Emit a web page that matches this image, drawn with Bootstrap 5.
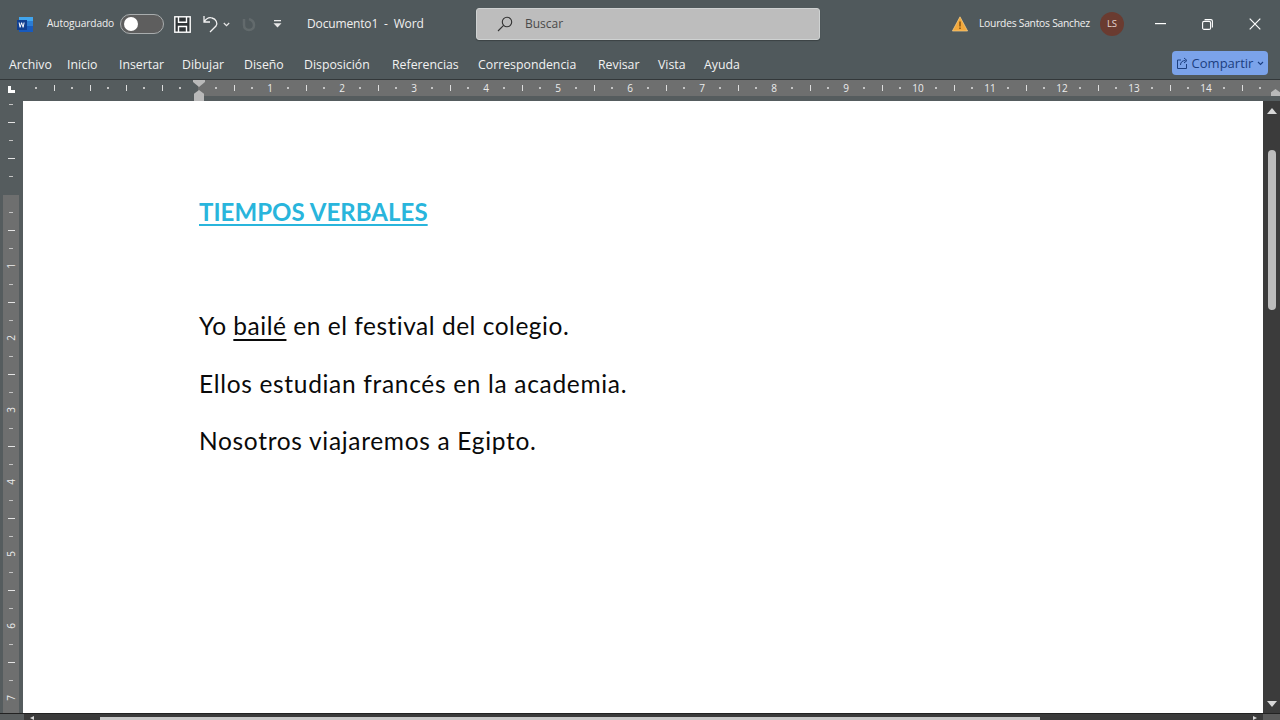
<!DOCTYPE html>
<html lang="es">
<head>
<meta charset="utf-8">
<title>Documento1 - Word</title>
<link href="https://cdn.jsdelivr.net/npm/bootstrap@5.3.0/dist/css/bootstrap.min.css" rel="stylesheet">
<style>
html,body{height:720px;overflow:hidden;background:#50595c}
body{font-family:"Open Sans","Noto Sans",sans-serif}
.wd-title{height:48px;background:#50595c;color:#f0f0f0;font-size:10.2px}
.wd-title>*{flex:none}
.wd-logo{margin-left:16px;width:17px;height:17px}
.wd-auto{margin-left:14px;width:68px;white-space:nowrap;letter-spacing:-.1px}
.wd-toggle{margin-left:5px;width:44px;height:20px;border:1px solid #a9adae;border-radius:10px;background:#5e5e5e;padding:2px 3px}
.wd-knob{width:14px;height:14px;border-radius:50%;background:#fff}
.wd-save{margin-left:10px}
.wd-undo{margin-left:12px}
.wd-chev{margin-left:4px}
.wd-redo{margin-left:11px}
.wd-qa{margin-left:16px}
.wd-doc{margin-left:25px;width:169px;font-size:12px;letter-spacing:-.15px;white-space:nowrap}
.wd-search{width:344px;height:32px;background:#bdbdbd;border:1px solid #cfd2d2;border-radius:3px;color:#4a4a4a;font-size:12px;box-shadow:0 1px 1px #3b4244}
.wd-search svg{margin-left:20px;margin-right:12px}
.wd-warn{margin-left:132px}
.wd-user{margin-left:11px;width:121px;font-size:10.3px;letter-spacing:-.25px;white-space:nowrap}
.wd-avatar{width:24px;height:24px;border-radius:50%;background:#6a3b30;color:#e6d5d0;font-size:9.5px}
.wd-winbtn{width:47px}
.wd-min{margin-left:13px}
.wd-menu{height:31px;background:#50595c;color:#f2f2f2;font-size:12.3px;padding:3px 0 0 9px;display:grid;grid-template-columns:58px 52px 63px 62px 60px 88px 86px 120px 60px 46px 468px 96px;align-items:center;white-space:nowrap}
.wd-share{width:96px;height:24px;padding:2px 0 0 3px;background:#7ba3ea;border:0;border-radius:4px;color:#1c3f80;font-size:13px;margin-top:-5px}
.wd-share:hover{background:#7ba3ea;color:#1c3f80}
.wd-share svg{margin-right:3px}
.wd-rule-h{height:22px;background:#555c5e;border-top:1px solid #33383a;position:relative;overflow:hidden}
.wd-tab{width:27px}
.wd-tab-glyph{width:7px;height:7px;margin:6px 0 0 8px;border-left:3px solid #fff;border-bottom:3px solid #fff}
.wd-rl{width:171px;height:16px}
.wd-rr{height:16px;background:#6e6f6f;padding-left:9px}
.wd-c{width:18px;height:16px;flex:none;display:flex;align-items:center;justify-content:center;color:#ececec;font-size:10px;line-height:1}
.wd-c.dt::before{content:"";width:2px;height:2px;background:#c4c4c4}
.wd-c.tk::before{content:"";width:1px;height:6px;background:#dedede}
.wd-ind-top{position:absolute;left:193px;top:0;width:12px;height:7px;background:#b9b9b9;clip-path:polygon(0 0,100% 0,100% 30%,50% 100%,0 30%)}
.wd-ind-bot{position:absolute;left:194px;top:10px;width:10px;height:11px;background:#b9b9b9;clip-path:polygon(50% 0,100% 35%,100% 100%,0 100%,0 35%)}
.wd-ind-r{position:absolute;left:1271px;top:9px;width:9px;height:7px;background:#b9b9b9;clip-path:polygon(50% 0,100% 45%,100% 100%,0 100%,0 45%)}
.wd-work{height:619px}
.wd-rule-v{width:23px;background:#555c5e;overflow:hidden}
.wd-vstrip{margin:-6px 0 0 3px;width:16px;background:linear-gradient(#555c5e 100px,#6e6f6f 100px)}
.wd-v{width:16px;height:18px;display:flex;align-items:center;justify-content:center;color:#ececec;font-size:10px;line-height:1}
.wd-v.dt::before{content:"";width:4px;height:1px;background:#c4c4c4}
.wd-v.tk::before{content:"";width:7px;height:1px;background:#e4e4e4}
.wd-v span{transform:rotate(-90deg)}
.wd-page{background:#fff;height:612px;padding:97px 0 0 176px;color:#0a0a0a;font-family:Lato,"Noto Sans",sans-serif;font-size:24.5px}
.wd-head{font-size:24px;font-weight:700;color:#29b5dc;text-decoration:underline;text-underline-offset:3px;text-decoration-thickness:1.5px;line-height:28px;margin:0 0 86px;letter-spacing:.05px}
.wd-line{line-height:28px;margin:0 0 29.5px;letter-spacing:.68px}
.wd-line-tight{letter-spacing:.52px}
.wd-line u{text-underline-offset:4px;text-decoration-thickness:1.5px}
.wd-vscroll{width:17px;height:619px;background:#3b3b3b}
.wd-arr-up{width:0;height:0;margin:7px auto 0;border:5px solid transparent;border-top:0;border-bottom:6px solid #d8d8d8}
.wd-thumb{width:8px;height:160px;margin:36px auto 0;background:#bcbcbc;border-radius:4px}
.wd-arr-dn{width:0;height:0;margin:0 auto 13px;border:5px solid transparent;border-bottom:0;border-top:6px solid #d8d8d8}
.wd-hscroll{height:7px;margin-top:-7px;background:#3b3b3b;border-top:1px solid #222;position:relative}
.wd-hleft{width:24px;background:#5a5e5f}
.wd-harr-l{width:0;height:0;margin:2px 0 0 6px;border:2px solid transparent;border-left:0;border-right:4px solid #d8d8d8}
.wd-hspace{width:68px}
.wd-hthumb{width:940px;height:3px;margin-top:3px;background:#c8c8c8}
.wd-harr-r{width:0;height:0;margin:2px 6px 0 0;border:2px solid transparent;border-right:0;border-left:4px solid #d8d8d8}
.wd-corner{width:17px;background:#5a5a5a}
</style>
</head>
<body>
<div class="d-flex flex-column">

  <header class="wd-title d-flex align-items-center">
    <svg class="wd-logo" viewBox="0 0 17 17"><rect x="3" y="1" width="14" height="15" fill="#2b7cd3"/><rect x="3" y="1" width="14" height="4" fill="#41a5ee"/><rect x="3" y="10" width="14" height="6" fill="#185abd"/><rect x="1" y="4" width="10" height="10" fill="#103f91"/><path d="M2.6 6.4l1 5h1l1-3.4 1 3.4h1l1-5h-1l-.6 3.3-.9-3.3h-1l-.9 3.3-.6-3.3z" fill="#fff"/></svg>
    <span class="wd-auto">Autoguardado</span>
    <div class="wd-toggle d-flex align-items-center"><div class="wd-knob"></div></div>
    <svg class="wd-save" width="17" height="17" viewBox="0 0 17 17" fill="none" stroke="#fff" stroke-width="1.4"><rect x=".8" y=".8" width="15.400" height="15.400" fill="#2f3436"/><path d="M4.500 1v5.300h8V1M4.500 16v-5.500h8V16"/></svg>
    <svg class="wd-undo" width="16" height="18" viewBox="0 0 16 18" fill="none" stroke="#f2f2f2" stroke-width="1.300"><path d="M1 1v6h6M1 7c2-3 5-5 8-4 4 1 6 5 4 8l-6 6"/></svg>
    <svg class="wd-chev" width="7" height="5" viewBox="0 0 7 5" fill="none" stroke="#e8e8e8" stroke-width="1.200"><path d="M.8 1l2.700 2.700L6.200 1"/></svg>
    <svg class="wd-redo" width="16" height="17" viewBox="0 0 16 17" fill="none" stroke="#626a6c" stroke-width="2.500"><path d="M3 3v6c0 3 2 5 5 5s5-2 5-5c0-3-2-5-5-6"/></svg>
    <svg class="wd-qa" width="9" height="8" viewBox="0 0 9 8" fill="#e8e8e8"><rect x="1" y="0" width="7" height="1.300"/><path d="M.5 3.200h8L4.500 7.500z"/></svg>
    <span class="wd-doc">Documento1&nbsp; -&nbsp; Word</span>
    <div class="wd-search d-flex align-items-center">
      <svg width="16" height="16" viewBox="0 0 16 16" fill="none" stroke="#333" stroke-width="1.100"><circle cx="10" cy="6" r="4.700"/><path d="M6.600 9.400L1 15"/></svg>
      <span>Buscar</span>
    </div>
    <svg class="wd-warn" width="16" height="16" viewBox="0 0 16 16"><path d="M8 .8L15.600 15H.4z" fill="#f3a83b" stroke="#f7d08a" stroke-width=".7"/><rect x="7.300" y="5.500" width="1.400" height="5" fill="#7a4a10"/><rect x="7.300" y="11.500" width="1.400" height="1.500" fill="#7a4a10"/></svg>
    <span class="wd-user">Lourdes Santos Sanchez</span>
    <div class="wd-avatar d-flex align-items-center justify-content-center">LS</div>
    <div class="wd-winbtn wd-min d-flex justify-content-center"><svg width="11" height="2" viewBox="0 0 11 2"><rect width="11" height="1.200" fill="#fff"/></svg></div>
    <div class="wd-winbtn d-flex justify-content-center"><svg width="11" height="11" viewBox="0 0 11 11" fill="none" stroke="#fff" stroke-width="1.100"><rect x=".6" y="2.400" width="8" height="8" rx="1.500"/><path d="M2.600.6h6.300a1.600 1.600 0 0 1 1.500 1.500v6.300"/></svg></div>
    <div class="wd-winbtn d-flex justify-content-center"><svg width="12" height="12" viewBox="0 0 12 12" stroke="#fff" stroke-width="1.200"><path d="M.7.7l10.600 10.600M11.300.7L.7 11.300"/></svg></div>
  </header>

  <nav class="wd-menu">
    <span>Archivo</span><span>Inicio</span><span>Insertar</span><span>Dibujar</span><span>Diseño</span><span>Disposición</span><span>Referencias</span><span>Correspondencia</span><span>Revisar</span><span>Vista</span><span>Ayuda</span>
    <button type="button" class="btn wd-share d-flex align-items-center justify-content-center">
      <svg width="13" height="13" viewBox="0 0 13 13" fill="none" stroke="#1c3f80" stroke-width="1"><path d="M5 3H1.500v8.500h9V7M4.500 8c0-3 2-4.500 5-4.500M8 1l3 2.500L8 6"/></svg>
      <span>Compartir</span>
      <svg class="ms-1" width="7" height="5" viewBox="0 0 7 5" fill="none" stroke="#1c3f80" stroke-width="1.100"><path d="M1 1l2.500 2.500L6 1"/></svg>
    </button>
  </nav>

  <div class="wd-rule-h d-flex">
    <div class="wd-tab flex-none"><div class="wd-tab-glyph"></div></div>
    <div class="wd-rl d-flex flex-none">
      <b class="wd-c dt"></b><b class="wd-c tk"></b><b class="wd-c dt"></b><b class="wd-c tk"></b><b class="wd-c dt"></b><b class="wd-c tk"></b><b class="wd-c dt"></b><b class="wd-c tk"></b><b class="wd-c dt"></b>
    </div>
    <div class="wd-rr d-flex flex-grow-1">
      <b class="wd-c dt"></b><b class="wd-c tk"></b><b class="wd-c dt"></b><span class="wd-c">1</span>
      <b class="wd-c dt"></b><b class="wd-c tk"></b><b class="wd-c dt"></b><span class="wd-c">2</span>
      <b class="wd-c dt"></b><b class="wd-c tk"></b><b class="wd-c dt"></b><span class="wd-c">3</span>
      <b class="wd-c dt"></b><b class="wd-c tk"></b><b class="wd-c dt"></b><span class="wd-c">4</span>
      <b class="wd-c dt"></b><b class="wd-c tk"></b><b class="wd-c dt"></b><span class="wd-c">5</span>
      <b class="wd-c dt"></b><b class="wd-c tk"></b><b class="wd-c dt"></b><span class="wd-c">6</span>
      <b class="wd-c dt"></b><b class="wd-c tk"></b><b class="wd-c dt"></b><span class="wd-c">7</span>
      <b class="wd-c dt"></b><b class="wd-c tk"></b><b class="wd-c dt"></b><span class="wd-c">8</span>
      <b class="wd-c dt"></b><b class="wd-c tk"></b><b class="wd-c dt"></b><span class="wd-c">9</span>
      <b class="wd-c dt"></b><b class="wd-c tk"></b><b class="wd-c dt"></b><span class="wd-c">10</span>
      <b class="wd-c dt"></b><b class="wd-c tk"></b><b class="wd-c dt"></b><span class="wd-c">11</span>
      <b class="wd-c dt"></b><b class="wd-c tk"></b><b class="wd-c dt"></b><span class="wd-c">12</span>
      <b class="wd-c dt"></b><b class="wd-c tk"></b><b class="wd-c dt"></b><span class="wd-c">13</span>
      <b class="wd-c dt"></b><b class="wd-c tk"></b><b class="wd-c dt"></b><span class="wd-c">14</span>
      <b class="wd-c dt"></b><b class="wd-c tk"></b><b class="wd-c dt"></b>
    </div>
    <div class="wd-ind-top"></div><div class="wd-ind-bot"></div><div class="wd-ind-r"></div>
  </div>

  <div class="wd-work d-flex">
    <aside class="wd-rule-v flex-none">
      <div class="wd-vstrip">
        <b class="wd-v dt"></b><b class="wd-v tk"></b><b class="wd-v dt"></b><b class="wd-v tk"></b><b class="wd-v dt"></b><b class="wd-v"></b>
        <b class="wd-v dt"></b><b class="wd-v tk"></b><b class="wd-v dt"></b><div class="wd-v"><span>1</span></div>
        <b class="wd-v dt"></b><b class="wd-v tk"></b><b class="wd-v dt"></b><div class="wd-v"><span>2</span></div>
        <b class="wd-v dt"></b><b class="wd-v tk"></b><b class="wd-v dt"></b><div class="wd-v"><span>3</span></div>
        <b class="wd-v dt"></b><b class="wd-v tk"></b><b class="wd-v dt"></b><div class="wd-v"><span>4</span></div>
        <b class="wd-v dt"></b><b class="wd-v tk"></b><b class="wd-v dt"></b><div class="wd-v"><span>5</span></div>
        <b class="wd-v dt"></b><b class="wd-v tk"></b><b class="wd-v dt"></b><div class="wd-v"><span>6</span></div>
        <b class="wd-v dt"></b><b class="wd-v tk"></b><b class="wd-v dt"></b><div class="wd-v"><span>7</span></div>
        <b class="wd-v dt"></b>
      </div>
    </aside>
    <main class="wd-page flex-grow-1">
      <h1 class="wd-head">TIEMPOS VERBALES</h1>
      <p class="wd-line wd-line-tight">Yo <u>bailé</u> en el festival del colegio.</p>
      <p class="wd-line">Ellos estudian francés en la academia.</p>
      <p class="wd-line">Nosotros viajaremos a Egipto.</p>
    </main>
    <div class="wd-vscroll flex-none d-flex flex-column">
      <div class="wd-arr-up"></div>
      <div class="wd-thumb"></div>
      <div class="wd-arr-dn mt-auto"></div>
    </div>
  </div>

  <div class="wd-hscroll d-flex">
    <div class="wd-hleft flex-none"></div>
    <div class="wd-hspace flex-none d-flex"><div class="wd-harr-l"></div></div>
    <div class="wd-hthumb flex-none ms-2"></div>
    <div class="flex-grow-1"></div>
    <div class="wd-harr-r flex-none"></div>
    <div class="wd-corner flex-none"></div>
  </div>
</div>
</body>
</html>
